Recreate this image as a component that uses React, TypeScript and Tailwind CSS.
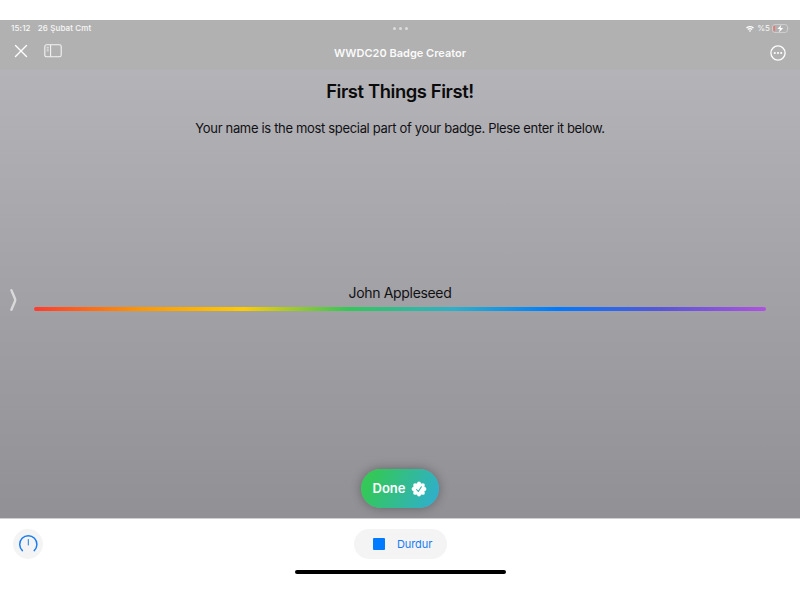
function StatusBar() {
  return (
    <div className="grid h-[17px] grid-cols-3 items-center pl-[11px] pr-[10px] text-[8px] leading-[17px] font-medium text-white/90">
      <div className="flex gap-[7px]">
        <span className="tracking-[0.15px]">15:12</span>
        <span className="tracking-[0.12px]">26 Şubat Cmt</span>
      </div>
      <div className="flex justify-center gap-[3px]">
        <i className="size-[3px] rounded-full bg-white/55" />
        <i className="size-[3px] rounded-full bg-white/55" />
        <i className="size-[3px] rounded-full bg-white/55" />
      </div>
      <div className="flex items-center justify-end">
        <svg className="mr-[3px] h-[6px] w-[8px]" viewBox="0 0 8 6" fill="none" stroke="white" strokeWidth="1.4">
          <path d="M.5 2.1C2.5.2 5.5.2 7.5 2.1M1.9 3.6C3.1 2.5 4.9 2.5 6.1 3.6" />
          <path d="M4 6 2.8 4.7Q4 3.8 5.2 4.7Z" fill="white" stroke="none" />
        </svg>
        <span className="mr-[2px] font-normal">%5</span>
        <svg className="h-[9px] w-[18px]" viewBox="0 0 18 9" fill="none">
          <rect x=".5" y=".5" width="15" height="8" rx="2.4" stroke="white" strokeOpacity=".45" strokeWidth=".8" />
          <path d="M16.8 3.2Q18 4.5 16.8 5.8Z" fill="white" fillOpacity=".5" />
          <rect x="1.4" y="1.8" width="1.5" height="5.4" rx=".7" fill="#ee6f6c" />
          <path d="M9.4.7 5.4 5h2.5l-1 3.4L11.2 4H8.5Z" fill="white" />
        </svg>
      </div>
    </div>
  );
}

function Toolbar() {
  return (
    <div className="grid h-[33px] grid-cols-3 pl-[14px] pr-[14px]">
      <div className="flex gap-[17px] pt-[6px]">
        <svg className="mt-[1px] size-[14px]" viewBox="0 0 14 14" fill="none" stroke="white" strokeWidth="1.4" strokeLinecap="round">
          <path d="m1.5 1.5 11 11M12.5 1.5l-11 11" />
        </svg>
        <svg className="mt-px h-[14px] w-[18px] -translate-x-px" viewBox="0 0 18 14" fill="none" stroke="white" strokeOpacity=".85" strokeWidth="1.1">
          <rect x=".8" y=".8" width="16.4" height="12" rx="1.8" />
          <path d="M6.6 1v11.6" />
          <path d="M2.6 3.3h2.2M2.6 5.1h2.2M2.6 6.9h2.2" strokeWidth=".8" />
        </svg>
      </div>
      <h1 className="pt-[7px] text-center text-[11px] leading-[18px] font-semibold whitespace-nowrap text-white/95">
        WWDC20 Badge Creator
      </h1>
      <div className="flex justify-end pt-[8px]">
        <svg className="size-[16px]" viewBox="0 0 16 16" fill="none">
          <circle cx="8" cy="8" r="7.1" stroke="white" strokeWidth="1.3" />
          <g fill="white">
            <circle cx="4.8" cy="8" r="1.05" />
            <circle cx="8" cy="8" r="1.05" />
            <circle cx="11.2" cy="8" r="1.05" />
          </g>
        </svg>
      </div>
    </div>
  );
}

function SealIcon() {
  return (
    <svg className="size-[16px]" viewBox="0 0 16 16" fill="none">
      <g fill="white">
        <circle cx="8" cy="8" r="6.1" />
        <circle cx="8" cy="2.5" r="1.9" />
        <circle cx="11.9" cy="4.1" r="1.9" />
        <circle cx="13.5" cy="8" r="1.9" />
        <circle cx="11.9" cy="11.9" r="1.9" />
        <circle cx="8" cy="13.5" r="1.9" />
        <circle cx="4.1" cy="11.9" r="1.9" />
        <circle cx="2.5" cy="8" r="1.9" />
        <circle cx="4.1" cy="4.1" r="1.9" />
      </g>
      <path d="m5.6 8.5 1.7 2 3.1-4.7" stroke="#32b4ad" strokeWidth="1.1" strokeLinecap="round" strokeLinejoin="round" />
    </svg>
  );
}

export default function App() {
  return (
    <div className="flex h-[600px] w-[800px] flex-col overflow-hidden bg-white pt-[20px] font-['Inter','Liberation_Sans',sans-serif]">
      <header className="h-[50px] shrink-0 bg-[#b1b1b1]">
        <StatusBar />
        <Toolbar />
      </header>

      <main className="flex h-[448px] shrink-0 flex-col items-center bg-linear-to-b from-[#b4b3b8] to-[#919095] text-[#111113]">
        <h2 className="mt-[8px] text-[18.4px] leading-[26px] font-semibold tracking-[-0.4px] whitespace-nowrap text-[#0b0b0c]">
          First Things First!
        </h2>
        <p className="mt-[14px] text-[13px] leading-[20px] tracking-[-0.33px] whitespace-nowrap">
          Your name is the most special part of your badge. Plese enter it below.
        </p>
        <div className="mt-[145px] flex h-[34px] w-full items-start pl-[9px]">
          <svg className="mt-[5px] h-[24px] w-[8px]" viewBox="0 0 8 24" fill="none" stroke="#d9d9dc" strokeWidth="2.4" strokeLinecap="round" strokeLinejoin="round">
            <path d="M2.4 2.2 6 10.8Q6.5 12 6 13.2L2.4 21.8" />
          </svg>
          <div className="ml-[17px] w-[732px]">
            <div className="text-center text-[14px] leading-[20px] tracking-[-0.33px]">John Appleseed</div>
            <div className="mt-[4px] h-[4px] rounded-full bg-[linear-gradient(90deg,#ff3b30_0%,#ff9500_14.3%,#ffcc00_28.6%,#34c759_42.9%,#30b0c7_57.1%,#007aff_71.4%,#5856d6_85.7%,#af52de_100%)]" />
          </div>
        </div>
        <button className="mt-[152px] flex h-[39px] w-[78px] items-center justify-center gap-[6px] rounded-full bg-[linear-gradient(115deg,#34c759_15%,#30b0c7_90%)] text-[13px] font-semibold text-white shadow-[0_0_11px_rgba(0,0,0,0.33)]">
          Done
          <SealIcon />
        </button>
      </main>

      <footer className="flex h-[82px] shrink-0 flex-col items-center border-t border-[#cfcfd1]">
        <div className="grid w-full grid-cols-3 items-center pt-[10px]">
          <button className="ml-[13px] flex size-[30px] items-center justify-center rounded-full bg-[#f4f4f4]">
            <svg className="size-[20px]" viewBox="0 0 20 20" fill="none" stroke="#177df5" strokeLinecap="round">
              <path d="M4.4 16.6A8.6 8.6 0 1 1 16.2 16.6" strokeWidth="1.5" />
              <path d="M10.3 5.5V11" strokeWidth="1" />
            </svg>
          </button>
          <button className="ml-px flex h-[30px] w-[93px] items-center gap-[12px] justify-self-center rounded-full bg-[#f4f4f4] pl-[19px] text-[11px] tracking-[-0.1px] text-[#177df5]">
            <i className="size-[12px] rounded-[1px] bg-[#007aff]" />
            <span className="pt-px">Durdur</span>
          </button>
        </div>
        <div className="mt-[11px] h-[4px] w-[211px] rounded-full bg-black" />
      </footer>
    </div>
  );
}
